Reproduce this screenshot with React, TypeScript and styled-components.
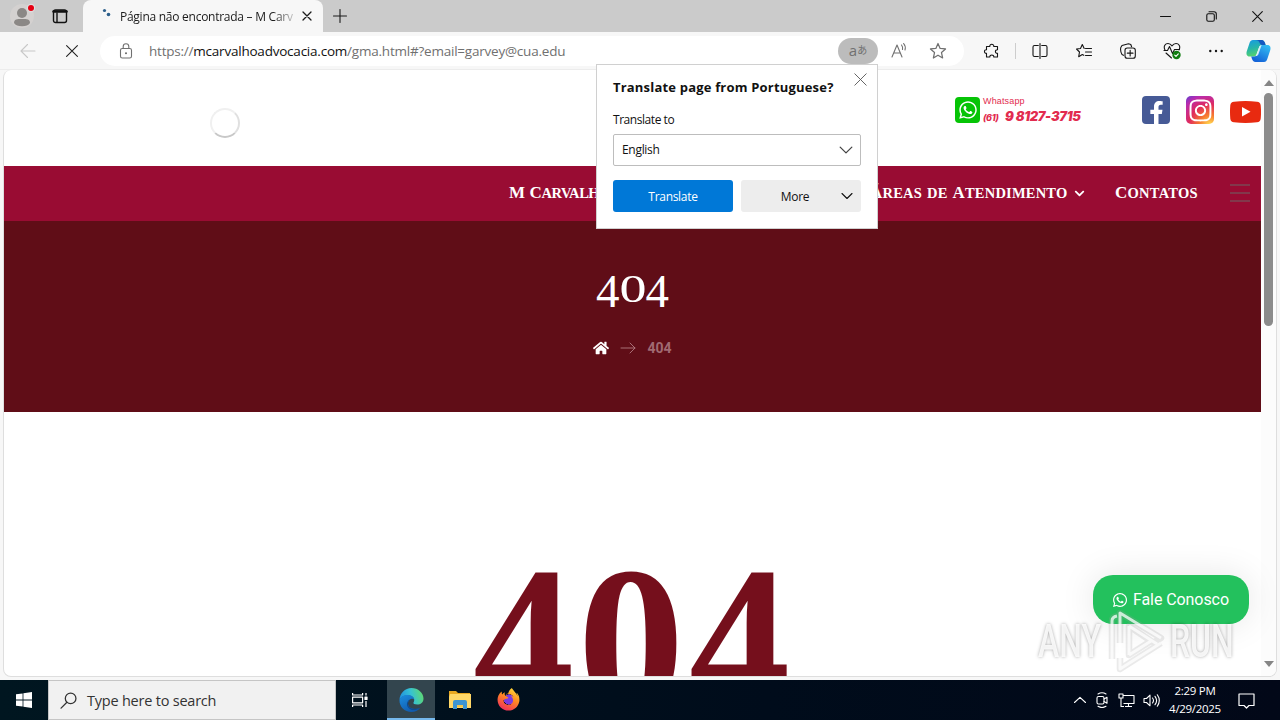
import React from "react";
import styled, { createGlobalStyle } from "styled-components";
import {
  FaChevronDown,
  FaFacebookF,
  FaFirefoxBrowser,
  FaHome,
  FaInstagram,
  FaWhatsapp,
} from "react-icons/fa";

const GlobalStyle = createGlobalStyle`
  * {
    box-sizing: border-box;
  }
  body {
    margin: 0;
    overflow: hidden;
    font-family: "Open Sans", "Noto Sans", sans-serif;
  }
  svg {
    display: block;
    flex: none;
  }
`;

interface IIcon {
  size?: number;
  children: React.ReactNode;
  weight?: number;
  box?: number;
}
const Icon: React.FC<IIcon> = ({ size = 16, children, weight = 1.1, box = 16 }) => (
  <svg
    width={size}
    height={size}
    viewBox={`0 0 ${box} ${box}`}
    fill="none"
    stroke="currentColor"
    strokeWidth={weight}
    strokeLinecap="round"
    strokeLinejoin="round"
  >
    {children}
  </svg>
);

const STAR = "M8 1.3 9.9 5.7 14.7 6.2 11.1 9.4 12.1 14.2 8 11.7 3.9 14.2 4.9 9.4 1.3 6.2 6.1 5.7Z";

const TabStrip = () => (
  <Strip>
    <Profile>
      <svg width="28" height="26" viewBox="0 0 28 26">
        <circle cx="14" cy="13" r="12" fill="#d4d1d0" />
        <circle cx="14" cy="10" r="5" fill="#8b8886" />
        <path d="M6 20c0-4 3-4 8-4s8 0 8 4c-1.500 2.500-4 3.200-8 3.200S7.500 22.500 6 20Z" fill="#8b8886" />
        <circle cx="23" cy="5" r="4.200" fill="#dedede" />
        <circle cx="23" cy="5" r="3" fill="#e60012" />
      </svg>
    </Profile>
    <TabActions>
      <Icon weight={1.4}>
        <rect x="1.500" y="2" width="13" height="12.500" rx="2" />
        <path d="M1.500 3.500h13" strokeWidth="2.500" />
        <path d="M5 5v9" />
      </Icon>
    </TabActions>
    <Tab>
      <svg width="16" height="16" viewBox="0 0 16 16" fill="#2d5f8b">
        <circle cx="3.500" cy="2.500" r="1.600" />
        <circle cx="7.500" cy="6.500" r="1.800" />
      </svg>
      <TabTitle>Página não encontrada – M Carv</TabTitle>
      <Icon size={10} box={10} weight={1.3}>
        <path d="m1 1 8 8M9 1 1 9" />
      </Icon>
    </Tab>
    <NewTab>
      <Icon size={14} box={14}>
        <path d="M7 .5v13M.5 7h13" />
      </Icon>
    </NewTab>
    <WindowButtons>
      <Icon size={11} box={11}>
        <path d="M.5 5.500h10" />
      </Icon>
      <Icon size={11} box={11}>
        <rect x=".8" y="2.700" width="7.500" height="7.500" rx="1.500" />
        <path d="M3 .7h5a2.300 2.300 0 0 1 2.300 2.300v5" />
      </Icon>
      <Icon size={11} box={11}>
        <path d="m.7.7 9.600 9.600M10.300.7.7 10.300" />
      </Icon>
    </WindowButtons>
  </Strip>
);

const Toolbar = () => (
  <ToolbarRow>
    <NavButton $muted>
      <Icon>
        <path d="M15 8H1M7.500 1.500 1 8l6.500 6.500" />
      </Icon>
    </NavButton>
    <NavButton>
      <Icon size={12} box={12}>
        <path d="m.6.6 10.800 10.800M11.400.6.6 11.400" />
      </Icon>
    </NavButton>
    <AddressBar>
      <Icon>
        <rect x="2.500" y="5.500" width="11" height="9.500" rx="1.800" />
        <path d="M5.200 5.300V3.500a2.800 2.800 0 0 1 5.600 0v1.800" />
        <circle cx="8" cy="10.300" r=".5" fill="currentColor" />
      </Icon>
      <Url>
        https://<b>mcarvalhoadvocacia.com</b>/gma.html#?email=garvey@cua.edu
      </Url>
      <TranslatePill>
        a<small>あ</small>
      </TranslatePill>
      <ReadAloud>
        <Icon size={17} box={17}>
          <path d="m1 15 5-12 5 12M2.800 11h6.400M10.500 3a5 5 0 0 1 1 4.500M12.600 1.500a7 7 0 0 1 1.400 6.500" />
        </Icon>
      </ReadAloud>
      <Icon size={18}>
        <path d={STAR} />
      </Icon>
    </AddressBar>
    <ToolCell $width={53}>
      <Icon>
        <path d="M2.500 3.500h3.300c-.5-3 4.400-3 4 0h3.700v3.300c-2.800-.3-2.800 3.700 0 3.600v3.600H9.800c.4-2.700-4.300-2.700-4 0h-3.300v-3.600c-2.700.3-2.700-4 0-3.600Z" transform="translate(1)" />
      </Icon>
    </ToolCell>
    <Divider />
    <ToolCell>
      <Icon>
        <path d="M6.300 2.500H2.500A1.500 1.500 0 0 0 1 4v8a1.500 1.500 0 0 0 1.500 1.500h3.800M9.700 2.500h3.800A1.500 1.500 0 0 1 15 4v8a1.500 1.500 0 0 1-1.500 1.500H9.700M8 .6v14.800" />
      </Icon>
    </ToolCell>
    <ToolCell>
      <Icon>
        <path d="M8.200 5.500 6.300 1.500 4.500 5.500.5 6l3 3-.8 4.700 3.600-2.200 1.500.8M9.500 5.500h6M9.500 9h6M9.500 12.500h6" />
      </Icon>
    </ToolCell>
    <ToolCell>
      <Icon>
        <path d="M3.500 12.300 2 11.500C.8 9.500.4 6.300.8 4.500L2 2.500 8.500.7l2.300.8.800 2.200" />
        <rect x="5" y="5" width="10.300" height="10.300" rx="2.300" />
        <path d="M10.150 7.300v5.700M7.300 10.150H13" />
      </Icon>
    </ToolCell>
    <ToolCell>
      <Icon size={18} box={18}>
        <path d="M2 8C0 4 2.500 1.500 5 1.500c2 0 3 1 4 2.300 1-1.300 2-2.300 4-2.300 2.500 0 5 2.500 3 6.500M1 8.500h3.500l2-4 3 7 2-4h5M3 11l5.500 5" />
        <circle cx="13.500" cy="13" r="4.200" fill="#107c10" stroke="none" />
        <path d="m11.700 13.100 1.300 1.300 2.300-2.500" stroke="#fff" />
      </Icon>
    </ToolCell>
    <ToolCell>
      <Icon>
        <g fill="currentColor" stroke="none">
          <circle cx="2.300" cy="8" r="1.200" />
          <circle cx="8" cy="8" r="1.200" />
          <circle cx="13.700" cy="8" r="1.200" />
        </g>
      </Icon>
    </ToolCell>
    <ToolCell $width={40}>
      <CopilotLogo />
    </ToolCell>
  </ToolbarRow>
);

const CopilotLogo = () => (
  <svg width="25" height="24" viewBox="0 0 25 24">
    <defs>
      <linearGradient id="copilotLeft" x1="0" y1="0" x2=".3" y2="1">
        <stop offset="0" stopColor="#1598e8" />
        <stop offset=".55" stopColor="#27b5a8" />
        <stop offset="1" stopColor="#55d36d" />
      </linearGradient>
      <linearGradient id="copilotRight" x1="1" y1="0" x2=".4" y2="1">
        <stop offset="0" stopColor="#35c5f5" />
        <stop offset="1" stopColor="#1464d8" />
      </linearGradient>
    </defs>
    <path d="M7 1h8.500c2 0 3 1.500 3.500 3l.6 2h-3.200c-2 0-3 1-3.600 3l-2 6c-.5 1.600-1.400 2.500-3 2.500H3.500C.8 17.500 0 15 .7 12.500l3-9C4.300 2 5.300 1 7 1Z" fill="url(#copilotLeft)" />
    <path d="M18 23H9.500c-2 0-3-1.500-3.500-3l-.8-2.500H8c2 0 3-1 3.600-3l2-6c.5-1.600 1.400-2.500 3-2.500h4.900c2.700 0 3.500 2.500 2.800 5l-3 9C20.700 22 19.700 23 18 23Z" fill="url(#copilotRight)" />
    <path d="M12.500 15 15.500 6.500c-.5-.3-1.700 0-2 .8L9.800 17c1.200 0 2.200-.6 2.700-2Z" fill="#e8f6ff" opacity=".85" />
    <path d="M9 1h6.500c2 0 3 1.500 3.500 3l.6 2h-3.200c-1 0-2-.5-2.700-2C13 2 12 1 9 1Z" fill="#1558c0" />
  </svg>
);

const Chevron: React.FC<{ size: number }> = ({ size }) => (
  <Icon size={size} box={12}>
    <path d="m1 3.500 5 5 5-5" />
  </Icon>
);

const TranslatePopup = () => (
  <Popup>
    <PopupHeader>
      <PopupTitle>Translate page from Portuguese?</PopupTitle>
      <Icon size={13} box={13} weight={0.9}>
        <path d="m.8.8 11.400 11.400M12.200.8.8 12.200" />
      </Icon>
    </PopupHeader>
    <PopupLabel>Translate to</PopupLabel>
    <LanguageSelect>
      English
      <Chevron size={14} />
    </LanguageSelect>
    <PopupButtons>
      <PopupButton $primary>Translate</PopupButton>
      <PopupButton>
        <span>More</span>
        <Chevron size={12} />
      </PopupButton>
    </PopupButtons>
  </Popup>
);

const SiteHeader = () => (
  <HeaderRow>
    <Spinner />
    <Contact>
      <ContactBadge>
        <FaWhatsapp size={20} />
      </ContactBadge>
      <ContactText>
        <ContactLabel>Whatsapp</ContactLabel>
        <ContactNumber>
          <small>(61)</small>
          <span>9 8127-3715</span>
        </ContactNumber>
      </ContactText>
    </Contact>
    <Socials>
      <FacebookBadge>
        <FaFacebookF size={23} />
      </FacebookBadge>
      <InstagramBadge>
        <FaInstagram size={25} />
      </InstagramBadge>
      <YoutubeBadge width="31" height="22" viewBox="0 0 31 22">
        <path d="M4 .7Q15.500-.5 27 .7q3.300.3 3.700 3.500.7 6.800 0 13.600-.4 3.200-3.700 3.500-11.500 1.200-23 0Q.7 21 .3 17.800q-.6-6.800 0-13.600Q.7 1 4 .7Z" fill="#e82a10" />
        <path d="M12 6v9.500l8.500-4.700Z" fill="#fff" />
      </YoutubeBadge>
    </Socials>
  </HeaderRow>
);

interface IMenuEntry {
  label: string;
  width: number;
  spacing: number;
}
const MenuEntry: React.FC<IMenuEntry> = ({ label, width, spacing }) => (
  <MenuItem $width={width} $spacing={spacing}>
    {label.split(" ").map((word) => (
      <MenuWord key={word} $plain={word === "de"}>
        {word}
      </MenuWord>
    ))}
  </MenuItem>
);

const Page = () => (
  <PageBody>
    <SiteHeader />
    <Menu>
      <MenuEntry label="M Carvalho" width={112} spacing={-0.45} />
      <MenuEntry label="Áreas de Atendimento" width={198} spacing={0.2} />
      <FaChevronDown size={11} />
      <MenuEntry label="Contatos" width={83} spacing={0.25} />
      <Burger>
        <i />
        <i />
        <i />
      </Burger>
    </Menu>
    <Hero>
      <HeroTitle>
        <span>4</span>
        <em>0</em>
        <span>4</span>
      </HeroTitle>
      <Crumbs>
        <FaHome size={16} />
        <Icon weight={0.9}>
          <path d="M1 8h14M10 3l5 5-5 5" />
        </Icon>
        <b>404</b>
      </Crumbs>
    </Hero>
    <NotFound>
      <Digit $scale={0.95}>4</Digit>
      <Digit $scale={1}>0</Digit>
      <Digit $scale={0.95}>4</Digit>
    </NotFound>
  </PageBody>
);

const Watermark = () => (
  <Mark>
    <MarkText>ANY</MarkText>
    <svg width="60" height="64" viewBox="0 0 60 64" fill="none" strokeLinejoin="round">
      <g stroke="#a0a0a0" strokeOpacity=".22" strokeWidth="6.500">
        <path d="M5 50V12q0-4 5-5M13 34V4l41 25-10 6M13 49v11l41-26M22 17v29l22-14Z" />
      </g>
      <g stroke="#fff" strokeOpacity=".75" strokeWidth="3">
        <path d="M5 50V12q0-4 5-5M13 49V4l41 25M22 17v29M22 17l28 18M13 49v11l41-26M22 46l22-14" />
      </g>
    </svg>
    <MarkText>RUN</MarkText>
  </Mark>
);

const FolderIcon = () => (
  <svg width="22" height="20" viewBox="0 0 22 20">
    <path d="M0 1h7l2 2h12v15H0Z" fill="#e9a820" />
    <path d="M1 4h21v14H0V7Z" fill="#ffd767" />
    <path d="M4 19v-7q0-2 2-2h10q2 0 2 2v7h-4v-4H8v4Z" fill="#3d95d2" />
    <path d="M8 15h6v2H8Z" fill="#f5c64a" />
  </svg>
);

const EdgeLogo = () => (
  <svg width="25" height="24" viewBox="0 0 25 24">
    <defs>
      <linearGradient id="edgeTop" x1="0" y1=".6" x2="1" y2=".4">
        <stop offset="0" stopColor="#1f8fe0" />
        <stop offset=".5" stopColor="#35c1d5" />
        <stop offset="1" stopColor="#5fd971" />
      </linearGradient>
      <linearGradient id="edgeBottom" x1="0" y1="0" x2=".6" y2="1">
        <stop offset="0" stopColor="#1b8ee0" />
        <stop offset="1" stopColor="#1159ab" />
      </linearGradient>
    </defs>
    <path d="M.5 12C.8 5 6 0 12.500 0S24.500 5 24.500 10.500c0 4-3 6-6.200 6-3 0-4.300-1-3.800-2 1.500-2 1-6.500-4.500-7C5 7 1.500 9 .5 12Z" fill="url(#edgeTop)" />
    <path d="M.5 12C1.500 8.500 5 6.800 9 7c3.500.2 6 2 6.300 4.500-1.800-1.700-6.300-.5-6.300 4 0 4 4.500 7 12 4.500C19 22.600 16 24 12.500 24 5.500 24 .2 18.500.5 12Z" fill="url(#edgeBottom)" />
    <path d="M12 11c-1.800.8-3 2.500-3 4.700 0 3.800 4.500 6.600 12 4.300-3 2.200-7 2.700-9.800 1.200C6.500 18.500 7 12.500 12 11Z" fill="#0d4a92" />
  </svg>
);

const Taskbar = () => (
  <Bar>
    <BarCell $narrow>
      <svg width="16" height="16" viewBox="0 0 16 16" fill="#fff">
        <path d="M0 2.300 6.600 1.400v6.200H0ZM7.400 1.300 16 0v7.600H7.400ZM0 8.400h6.600v6.200L0 13.700ZM7.400 8.400H16V16l-8.600-1.300Z" />
      </svg>
    </BarCell>
    <Search>
      <Icon size={17} weight={1.2}>
        <circle cx="10" cy="6" r="5" />
        <path d="M6.500 9.700 1 15.200" />
      </Icon>
      Type here to search
    </Search>
    <BarCell $narrow>
      <Icon weight={1.2}>
        <path d="M.6 1v2h10V1M.6 15v-2h10v2M.6 5.200h10v5.600H.6ZM14 1v2.500M14 9v6" strokeLinecap="butt" />
        <rect x="13" y="5" width="2" height="2.500" fill="currentColor" />
      </Icon>
    </BarCell>
    <BarCell $narrow $active>
      <EdgeLogo />
    </BarCell>
    <BarCell>
      <FolderIcon />
    </BarCell>
    <BarCell>
      <FirefoxLogo>
        <FaFirefoxBrowser size={23} />
      </FirefoxLogo>
    </BarCell>
    <Tray>
      <Icon size={12} box={12}>
        <path d="M.5 8.500 6 3.300l5.500 5.200" />
      </Icon>
      <Icon>
        <rect x="3" y="4.500" width="7" height="7.500" rx="1.500" />
        <path d="m10 7 3-1.700v6L10 9.500M4 2q4-2.500 8 0M4 14.300q4 2.500 8 0" />
      </Icon>
      <Icon size={17} box={17}>
        <path d="M5.500 3.500H16v8H5.500M10.500 11.500V14.500M7 14.500h7M1 2h4v4H1ZM3 6v8.500h3" strokeLinecap="butt" />
      </Icon>
      <Icon size={17} box={17}>
        <path d="M1 6.500h2.500L7 3.200v10.600l-3.500-3.300H1ZM9.500 6q2 2.500 0 5M12 4.300q3.200 4.200 0 8.400M14.300 2.800q4 5.700 0 11.400" />
      </Icon>
      <Clock>
        <span>2:29 PM</span>
        <span>4/29/2025</span>
      </Clock>
      <Icon size={17} box={17} weight={1.2}>
        <path d="M1 2h15v11.500h-5L8.500 16 6 13.500H1Z" />
      </Icon>
    </Tray>
    <svg width="0" height="0">
      <defs>
        <linearGradient id="foxFill" x1=".8" y1="0" x2=".3" y2="1">
          <stop offset="0" stopColor="#ffdf3b" />
          <stop offset=".45" stopColor="#ff8a22" />
          <stop offset="1" stopColor="#f02d5c" />
        </linearGradient>
      </defs>
    </svg>
  </Bar>
);

const App = () => (
  <Desktop>
    <GlobalStyle />
    <TabStrip />
    <Toolbar />
    <Viewport>
      <Page />
      <Scrollbar>
        <svg width="10" height="6" viewBox="0 0 10 6">
          <path d="M0 6 5 0l5 6Z" fill="#858585" />
        </svg>
        <Thumb />
        <svg width="10" height="6" viewBox="0 0 10 6">
          <path d="m0 0 5 6 5-6Z" fill="#858585" />
        </svg>
      </Scrollbar>
    </Viewport>
    <TranslatePopup />
    <ChatButton>
      <FaWhatsapp size={16} />
      Fale Conosco
    </ChatButton>
    <Watermark />
    <Taskbar />
  </Desktop>
);
export default App;

const Desktop = styled.div`
  position: relative;
  display: flex;
  flex-direction: column;
  width: 1280px;
  height: 720px;
  overflow: hidden;
  background: #f7f7f7;
  color: #1b1b1b;
`;

const Strip = styled.div`
  display: flex;
  flex: none;
  height: 32px;
  background: #cbcbcb;
`;

const Profile = styled.div`
  width: 44px;
  padding: 3px 0 0 8px;
`;

const TabActions = styled.div`
  width: 39px;
  padding: 8px 0 0 8px;
  color: #111;
`;

const Tab = styled.div`
  display: flex;
  align-items: center;
  width: 240px;
  padding: 0 11px 0 18px;
  border-radius: 8px 8px 0 0;
  background: #f7f7f7;
`;

const TabTitle = styled.span`
  width: 174px;
  margin: 0 8px 0 3px;
  overflow: hidden;
  font-size: 12px;
  letter-spacing: -0.26px;
  white-space: nowrap;
  mask-image: linear-gradient(90deg, #000 88%, rgba(0, 0, 0, 0.2));
`;

const NewTab = styled.div`
  padding: 9px 0 0 10px;
`;

const WindowButtons = styled.div`
  display: flex;
  align-items: center;
  gap: 35px;
  margin-left: auto;
  padding-right: 17px;
  color: #111;
`;

const ToolbarRow = styled.div`
  display: flex;
  flex: none;
  align-items: center;
  height: 38px;
  border-bottom: 1px solid #ececec;
`;

const NavButton = styled.div<{ $muted?: boolean }>`
  display: flex;
  justify-content: center;
  width: 44px;
  margin-left: ${({ $muted }) => ($muted ? "6px" : "0")};
  color: ${({ $muted }) => ($muted ? "#c8c8c8" : "#222")};
`;

const AddressBar = styled.div`
  display: flex;
  align-items: center;
  width: 864px;
  height: 30px;
  margin-left: 6px;
  padding: 0 17px 0 18px;
  border-radius: 15px;
  background: #fff;
  color: #707070;
`;

const Url = styled.span`
  flex: 1;
  margin-left: 15px;
  font-size: 13.5px;
  letter-spacing: -0.22px;
  b {
    color: #111;
    font-weight: 400;
  }
`;

const TranslatePill = styled.span`
  display: flex;
  align-items: center;
  justify-content: center;
  width: 40px;
  height: 26px;
  padding-bottom: 2px;
  border-radius: 13px;
  background: #bcbcbc;
  font-size: 15px;
  small {
    font-family: "Noto Sans CJK JP", sans-serif;
    font-size: 10px;
  }
`;

const ReadAloud = styled.span`
  margin: 0 21px 0 13px;
`;

const ToolCell = styled.div<{ $width?: number }>`
  display: flex;
  flex: none;
  align-items: center;
  justify-content: center;
  width: ${({ $width = 44 }) => $width}px;
  color: #161616;
`;

const Divider = styled.i`
  width: 1px;
  height: 16px;
  margin: 0 2px 0 -2px;
  background: #cdcdcd;
`;

const Viewport = styled.div`
  display: flex;
  flex: none;
  width: 1274px;
  height: 607px;
  margin: 0 0 3px 3px;
  overflow: hidden;
  border: 1px solid #dedede;
  border-top: 0;
  border-radius: 8px;
  background: #fff;
`;

const PageBody = styled.div`
  display: flex;
  flex: none;
  flex-direction: column;
  width: 1257px;
`;

const HeaderRow = styled.div`
  display: flex;
  flex: none;
  height: 96px;
`;

const Spinner = styled.i`
  width: 30px;
  height: 30px;
  margin: 38px 0 0 206px;
  border: 2px solid #f0f0f0;
  border-right-color: #e0e0e0;
  border-bottom-color: #c8c8c8;
  border-radius: 50%;
`;

const Contact = styled.div`
  display: flex;
  width: 130px;
  margin: 27px 0 0 715px;
`;

const ContactBadge = styled.div`
  display: flex;
  flex: none;
  align-items: center;
  justify-content: center;
  width: 25px;
  height: 26px;
  border-radius: 4px;
  background: #06c406;
  color: #fff;
`;

const ContactText = styled.div`
  margin-left: 3px;
  color: #e22c4f;
  white-space: nowrap;
`;

const ContactLabel = styled.div`
  margin-top: -2px;
  font-family: "Liberation Sans", sans-serif;
  font-size: 9px;
  line-height: 12px;
  letter-spacing: 0.15px;
`;

const ContactNumber = styled.div`
  display: flex;
  align-items: baseline;
  gap: 4px;
  font-family: Inter, sans-serif;
  font-size: 13px;
  font-style: italic;
  font-weight: 900;
  line-height: 19px;
  letter-spacing: -0.35px;
  small {
    width: 18px;
    font-size: 9px;
    font-weight: 800;
  }
`;

const Socials = styled.div`
  display: flex;
  align-items: center;
  gap: 16px;
  height: 30px;
  margin: 25px 0 0 auto;
`;

const FacebookBadge = styled.div`
  display: flex;
  align-items: flex-end;
  justify-content: flex-end;
  width: 28px;
  height: 28px;
  padding-right: 2px;
  border-radius: 4px;
  background: #465a96;
  color: #fff;
`;

const InstagramBadge = styled.div`
  display: flex;
  align-items: center;
  justify-content: center;
  width: 28px;
  height: 28px;
  border-radius: 5px;
  background: radial-gradient(circle at 85% 105%, #ffd34f 5%, #f7792f 28%, #e02b5d 55%, #b72cb0 82%, #5b3fd0);
  color: #fff;
`;

const YoutubeBadge = styled.svg`
  margin-top: 3px;
`;

const Menu = styled.div`
  display: flex;
  flex: none;
  align-items: center;
  height: 55px;
  padding-left: 505px;
  background: #990c33;
  color: #fff;
  > svg {
    margin: 0 30px 0 6px;
  }
`;

const MenuItem = styled.span<{ $width: number; $spacing: number }>`
  display: flex;
  align-items: baseline;
  gap: 5px;
  width: ${({ $width }) => $width}px;
  padding-bottom: 2px;
  font-family: "Liberation Serif", serif;
  font-size: 14.5px;
  font-weight: 700;
  letter-spacing: ${({ $spacing }) => $spacing}px;
  text-transform: uppercase;
  white-space: nowrap;
  & + & {
    margin-left: 249px;
  }
`;

const MenuWord = styled.span<{ $plain: boolean }>`
  display: block;
  &::first-letter {
    font-size: ${({ $plain }) => ($plain ? "14.5px" : "17px")};
  }
`;

const Burger = styled.div`
  display: flex;
  flex-direction: column;
  gap: 6px;
  width: 20px;
  margin: 0 0 2px 32px;
  i {
    height: 2px;
    background: #82384b;
  }
`;

const Hero = styled.div`
  display: flex;
  flex: none;
  flex-direction: column;
  align-items: center;
  height: 191px;
  background: #600d17;
`;

const HeroTitle = styled.div`
  display: flex;
  height: 58px;
  margin-top: 41px;
  color: #fff;
  font-family: "Liberation Serif", serif;
  font-size: 47px;
  line-height: 58px;
  em {
    width: 26px;
    font-size: 40px;
    font-style: normal;
    line-height: 54px;
    text-align: center;
    transform: scaleX(1.35);
  }
`;

const Crumbs = styled.div`
  display: flex;
  align-items: center;
  gap: 11px;
  margin-top: 18px;
  color: #fff;
  > svg + svg {
    color: #b27b82;
  }
  b {
    color: #a06a72;
    font-family: Roboto, sans-serif;
    font-size: 14px;
    line-height: 20px;
  }
`;

const NotFound = styled.div`
  display: flex;
  flex: none;
  justify-content: center;
  height: 264px;
  padding: 110px 2px 0 0;
  overflow: hidden;
  color: #750f1c;
  font-family: "Liberation Serif", serif;
  font-size: 214px;
  font-weight: 700;
  line-height: 240px;
`;

const Digit = styled.span<{ $scale: number }>`
  width: 108px;
  transform: scaleX(${({ $scale }) => $scale});
`;

const Scrollbar = styled.div`
  display: flex;
  flex: 1;
  flex-direction: column;
  align-items: center;
  padding: 10px 0 9px;
  background: #fcfcfc;
  svg:last-child {
    margin-top: auto;
  }
`;

const Thumb = styled.i`
  width: 9px;
  height: 233px;
  margin-top: 7px;
  border-radius: 5px;
  background: #8b8b8b;
`;

const Popup = styled.div`
  position: absolute;
  top: 64px;
  left: 596px;
  width: 282px;
  height: 165px;
  padding: 8px 16px;
  border: 1px solid #d0d0d0;
  background: #fff;
  color: #111;
  font-size: 12px;
  letter-spacing: -0.3px;
`;

const PopupHeader = styled.div`
  display: flex;
  justify-content: space-between;
  margin-right: -6px;
  svg {
    color: #555;
  }
`;

const PopupTitle = styled.div`
  font-size: 13px;
  font-weight: 700;
  line-height: 28px;
  letter-spacing: 0.19px;
  white-space: nowrap;
`;

const PopupLabel = styled.div`
  margin-top: 10px;
  line-height: 17px;
  letter-spacing: -0.45px;
`;

const LanguageSelect = styled.div`
  display: flex;
  align-items: center;
  justify-content: space-between;
  height: 32px;
  margin-top: 6px;
  padding: 0 7px 1px 8px;
  border: 1px solid #bdbdbd;
  border-radius: 2px;
  svg {
    color: #444;
  }
`;

const PopupButtons = styled.div`
  display: flex;
  gap: 8px;
  margin-top: 14px;
`;

const PopupButton = styled.div<{ $primary?: boolean }>`
  display: flex;
  align-items: center;
  justify-content: center;
  width: 120px;
  height: 32px;
  border-radius: 3px;
  background: ${({ $primary }) => ($primary ? "#0078d7" : "#ededed")};
  color: ${({ $primary }) => ($primary ? "#fff" : "#111")};
  span {
    margin: 0 32px 0 32px;
  }
`;

const ChatButton = styled.div`
  position: absolute;
  top: 575px;
  left: 1093px;
  display: flex;
  align-items: center;
  gap: 5px;
  width: 156px;
  height: 49px;
  padding-left: 19px;
  border-radius: 20px;
  background: #23c15d;
  box-shadow: 0 0 35px rgba(0, 0, 0, 0.1);
  color: #fff;
  font-family: Roboto, sans-serif;
  font-size: 16px;
  letter-spacing: -0.08px;
  white-space: nowrap;
`;

const Mark = styled.div`
  position: absolute;
  top: 608px;
  left: 1038px;
  display: flex;
  align-items: center;
  width: 196px;
  svg {
    margin: 0 3px 0 5px;
  }
`;

const MarkText = styled.span`
  width: 64px;
  color: rgba(255, 255, 255, 0.85);
  font-family: Roboto, sans-serif;
  font-size: 47px;
  font-weight: 500;
  line-height: 66px;
  text-shadow: 0 0 4px rgba(0, 0, 0, 0.35);
  transform: scaleX(0.68);
  transform-origin: left;
`;

const Bar = styled.div`
  display: flex;
  flex: none;
  height: 40px;
  background: linear-gradient(90deg, #001620, #000c1b 60%, #020818);
  color: #fff;
`;

const BarCell = styled.div<{ $active?: boolean; $narrow?: boolean }>`
  display: flex;
  flex: none;
  align-items: center;
  justify-content: center;
  width: ${({ $narrow }) => ($narrow ? 48 : 49)}px;
  margin-left: ${({ $active }) => ($active ? "3px" : "0")};
  padding-top: 1px;
  border-bottom: 2px solid ${({ $active }) => ($active ? "#76b9ed" : "transparent")};
  background: ${({ $active }) => ($active ? "#33454e" : "none")};
`;

const Search = styled.div`
  display: flex;
  align-items: center;
  gap: 10px;
  width: 288px;
  padding-left: 11px;
  border: 1px solid #c5c5c5;
  background: #f1f1f1;
  color: #333;
  font-size: 14.5px;
  letter-spacing: -0.22px;
`;

const FirefoxLogo = styled.div`
  border-radius: 50%;
  background: radial-gradient(circle at 52% 50%, #7a3be0 0 30%, transparent 31%);
  svg {
    fill: url(#foxFill);
  }
`;

const Tray = styled.div`
  display: flex;
  align-items: center;
  gap: 8px;
  margin-left: auto;
  padding-right: 25px;
`;

const Clock = styled.div`
  display: flex;
  flex-direction: column;
  align-items: center;
  width: 54px;
  margin: 0 8px 0 0;
  font-size: 11.5px;
  line-height: 18px;
  letter-spacing: -0.3px;
  white-space: nowrap;
`;
